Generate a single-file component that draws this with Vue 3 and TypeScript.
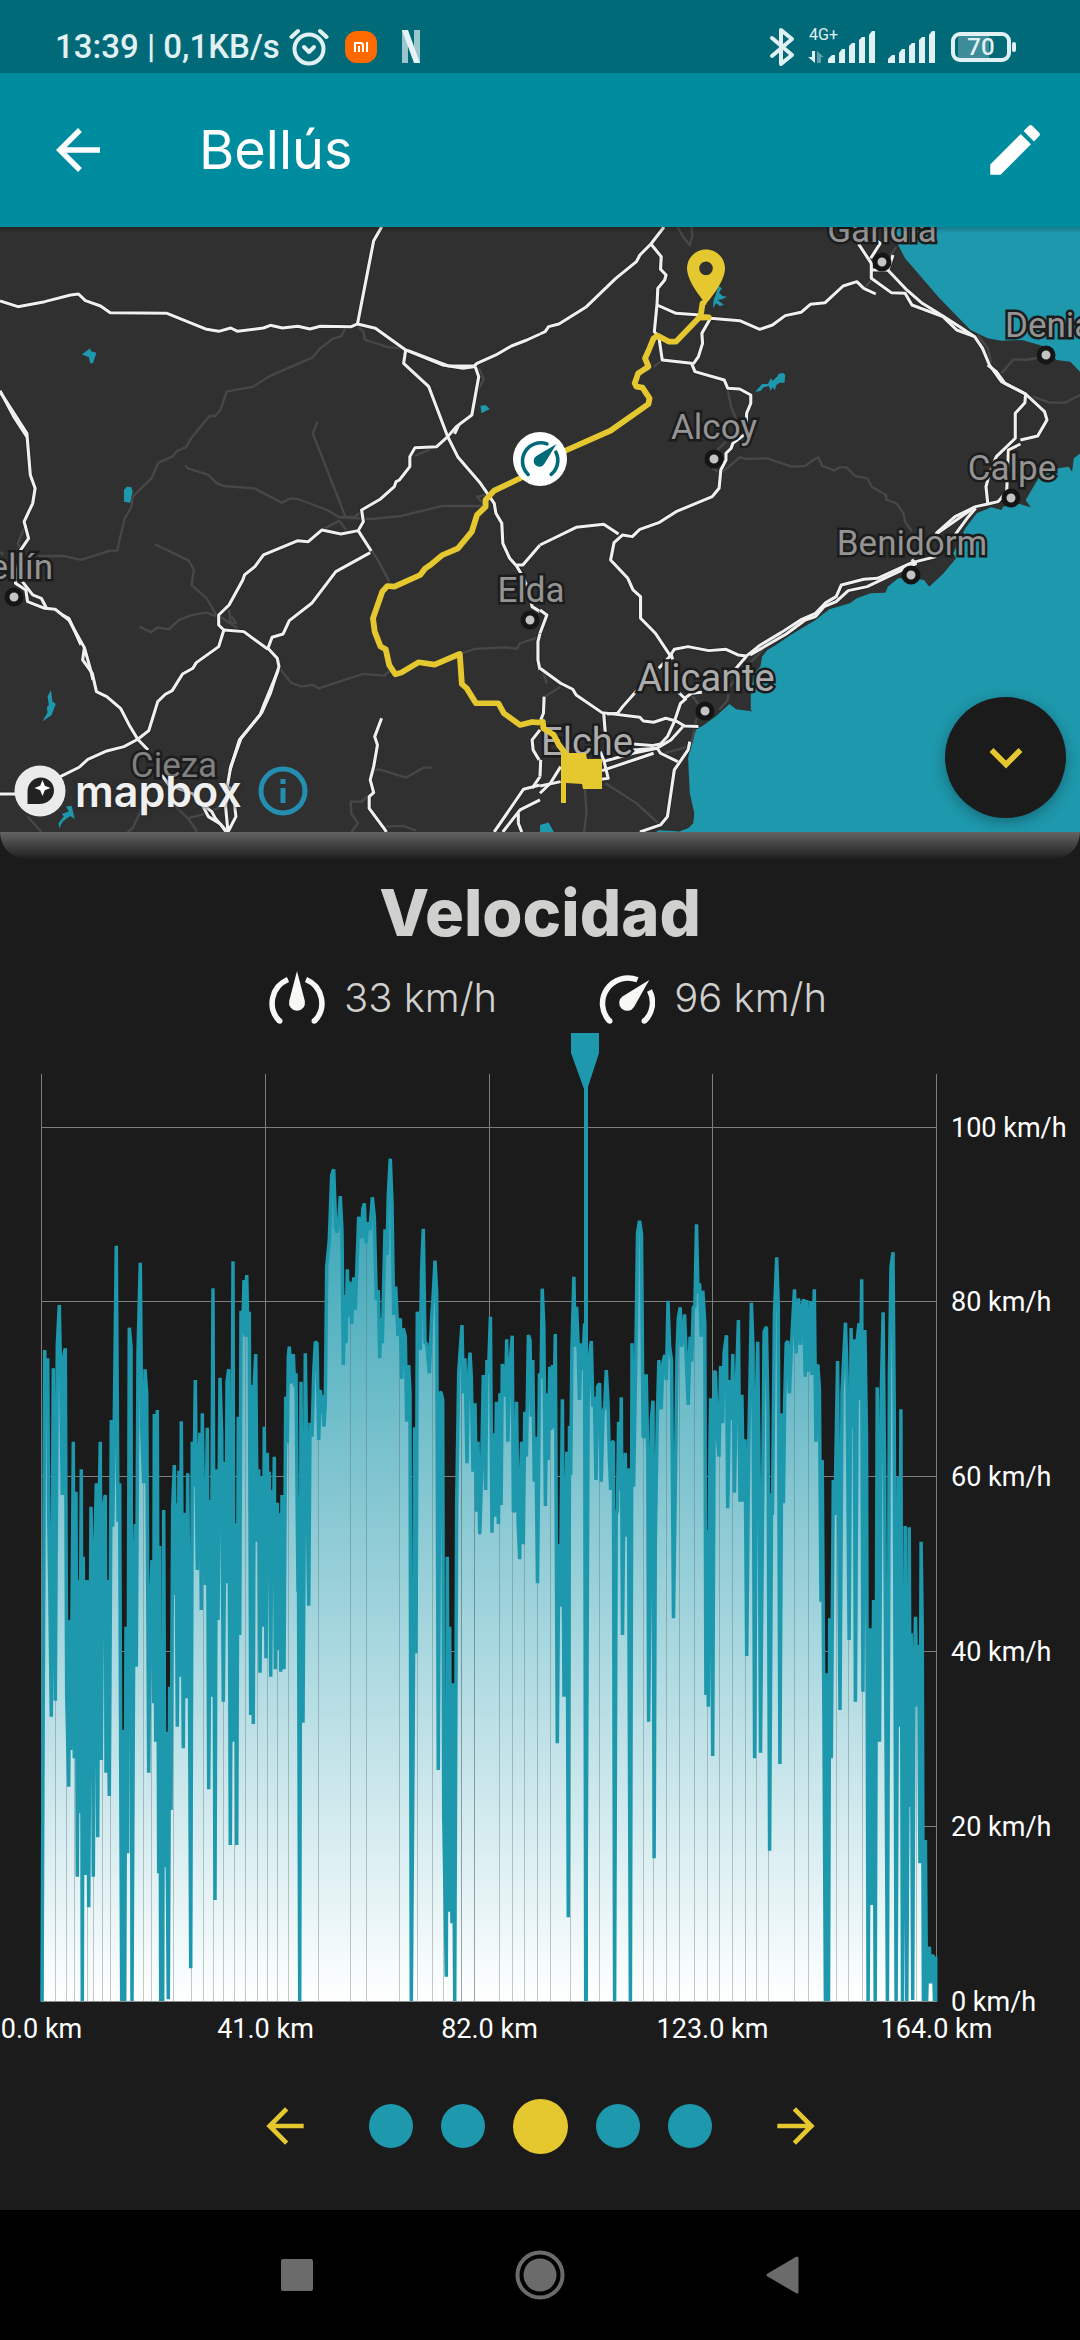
<script setup lang="ts">
import { computed, ref } from 'vue'

interface Tile {
  x: number
  minor: string[]
  major: string[]
  route: string[]
  lakes: string[]
}

interface Place {
  name: string
  x: number
  y: number
  anchor: 'start' | 'middle' | 'end'
  dot?: [number, number]
  size?: 'large'
  dim?: boolean
}

interface Trace {
  origin: number
  perPixel: number
  samples: string
  seams: number[]
}

/* Map geometry, one entry per vector tile */
const tiles: Tile[] = [
  {
    x: 0,
    minor: [
      '1003,325 990,350 968,355 930,385 908,412 780,470 735,500 658,515 640,570 625,588 608,588 555,655 540,682 515,692 500,710 460,728 440,775 385,830 382,860 362,895 340,992 320,992 235,1020 185,1008 110,1008',
      '1040,320 1055,335 1060,360 1130,382 1178,385',
      '922,605 908,640 1003,890',
      '538,735 545,745 605,765 630,790 650,798 738,805 818,848 845,835 865,837 950,870 985,892 1080,897 1165,888 1285,858 1410,858 1385,830 1410,825',
      '935,930 985,902 1005,930',
      '985,892 1030,890 1050,875',
      '450,973 548,1022 563,1050 556,1095 600,1135 625,1180 690,1225',
      '665,1170 670,1210 685,1208 672,1190',
      '405,1220 438,1237 458,1222 490,1228 520,1200 560,1185 600,1178 630,1190',
      '1080,993 1100,1025 1130,1085',
      '812,1345 845,1388 875,1400 908,1395 925,1405 1055,1362 1115,1367 1140,1345',
      '1335,1302 1380,1287 1470,1282 1500,1287 1510,1270 1568,1250',
      '1083,1652 1100,1648 1180,1673 1230,1643 1253,1643',
      '1072,1725 1050,1745 1018,1745 1020,1780 1040,1810 1020,1836',
      '1120,1820 1170,1818 1208,1832',
      '1390,445 1405,478 1385,515',
      '505,1755 545,1795 570,1830 570,1836',
      '545,1795 600,1780 640,1760',
      '70,925 52,970 62,1000',
      '0,995 10,1005',
      '410,1770 385,1825 370,1836',
      '80,1790 120,1836',
      '1205,708 1262,682',
    ],
    major: [
      '0,243 52,260 130,245 205,225 228,222 248,242 292,258 320,278 485,280 600,328 635,334 670,324 690,334 765,324 785,316 820,324 865,319 900,327 930,319 1020,320 1038,312 1090,325 1178,390 1285,435 1345,445 1375,440 1385,430 1440,405 1485,378 1530,360 1568,342',
      '1185,392 1300,437 1375,438',
      '1108,21 1085,62 1038,312',
      '0,515 78,640 88,765 102,805 95,850 70,905 83,955 60,990 58,1000 45,1090 75,1110 80,1145 130,1165 160,1168 200,1200 245,1283 240,1320 268,1360 280,1415 310,1430 350,1465 375,1515 400,1558 430,1590',
      '0,512 40,590 78,650',
      '65,1085 95,1125 120,1135 135,1165',
      '245,1283 262,1345 270,1380',
      '180,1185 200,1195 235,1275',
      '470,1665 490,1695 560,1722 590,1755 615,1775 625,1795 660,1836',
      '590,1760 605,1790 640,1812 655,1834',
      '1380,440 1390,470 1370,585 1325,620 1300,650 1268,680 1205,683 1190,710 1190,740 1160,780 1150,785 1145,800 1105,837 1050,870 1055,905 1040,932 990,942 935,930 895,965 865,962 765,1005 740,1040 710,1065 705,1080 665,1155 635,1185 635,1215 650,1230 635,1280 570,1328 560,1345 530,1362 500,1412 480,1423 458,1445 432,1532 400,1558 360,1580 310,1593 255,1618 230,1642 175,1670 100,1690 50,1722 0,1722',
      '1320,642 1332,615',
      '1178,390 1172,430 1245,500 1300,650 1330,712 1395,790 1435,850 1440,880 1457,910 1460,970 1480,1015 1500,1038 1518,1070 1535,1110 1545,1160 1568,1175',
      '1500,1035 1518,1035 1568,975',
      '1040,932 1078,993',
      '1075,998 975,1055 905,1150 840,1202 822,1242 790,1252 778,1285 805,1315 810,1340 785,1420 760,1478 700,1555 670,1640 660,1700 655,1760 662,1836 685,1790 680,1745 665,1700',
      '650,1230 708,1235 778,1288',
      '808,1350 768,1450 755,1485 695,1560 668,1650',
      '1108,1495 1088,1550 1096,1575 1085,1640 1075,1680 1085,1718 1072,1730 1072,1765 1115,1825 1122,1836',
      '1568,1530 1545,1560 1548,1590 1568,1625',
      '1568,1695 1520,1708 1435,1836',
      '1568,1740 1510,1770 1460,1836',
      '1568,1670 1545,1705',
      '1505,1780 1505,1810 1515,1836',
      '1568,1240 1562,1265 1562,1320 1568,1350',
    ],
    route: [
      '1568,725 1510,775 1435,812 1410,840 1410,860 1385,885 1370,935 1330,985 1285,1005 1250,1035 1235,1045 1220,1065 1145,1100 1125,1098 1110,1115 1083,1195 1088,1235 1105,1280 1120,1288 1130,1335 1148,1363 1165,1358 1215,1327 1262,1334 1335,1302 1341,1392 1355,1405 1382,1450 1447,1450 1463,1480 1510,1515 1545,1506 1568,1508',
    ],
    lakes: [
      '238,403 262,385 264,394 280,398 270,430 262,430 258,412',
      '360,810 368,800 382,802 385,815 378,848 360,845',
      '1395,557 1410,555 1422,567 1398,580',
      '148,1410 152,1445 162,1452 150,1485 123,1505 138,1478 136,1462 142,1455 138,1430',
      '192,1760 208,1758 217,1797 204,1788 182,1805 172,1826 170,1810 185,1790 180,1782 200,1775',
    ],
  },
  {
    x: 540,
    minor: [
      '545,510 555,560 570,600',
      '505,700 540,665',
      '500,745 525,760 580,712 600,717 660,715 730,740 770,738 790,722 808,712 820,738 855,752 870,742 890,742 915,768 950,775 965,802 1005,825 1005,838 1035,850 1055,880 1060,905 1080,935',
      '1340,460 1375,418 1410,420 1460,410',
      '1430,530 1480,548 1525,548 1568,525',
      '400,21 415,50 435,75 442,50 440,21',
      '1270,345 1300,385 1310,430',
      '1035,80 1015,110',
      '945,200 962,180',
      '330,440 350,425',
      '190,1690 280,1750 355,1820',
      '130,1700 135,1780 128,1836',
      '345,1605 430,1580',
      '440,1425 462,1455',
      '655,1280 600,1340 550,1400 545,1440 520,1470',
      '455,1495 440,1570',
      '15,1430 60,1400',
      '5,1345 20,1390',
    ],
    major: [
      '360,21 322,72 290,105 280,125 220,175 135,260 55,312 25,320 15,335 0,342',
      '322,72 352,110 350,148 366,165 362,180 342,205 340,250 332,335 345,350 355,420 440,430 450,455 535,480 545,505 580,507 612,525 612,550 600,580 598,640 560,670 555,685 540,700 540,720 525,750 520,805 500,830 395,875 345,908 290,928 268,950 240,945 215,968 205,1020 255,1075 270,1110 292,1130 292,1195 335,1240 380,1310',
      '340,255 395,280 465,285 495,295 580,302 638,328 675,315 712,287 758,277 785,253 828,248 880,198 920,185 940,205 975,222',
      '495,295 470,340 472,370 460,410 445,432',
      '925,72 962,130 962,175 1020,218 1060,220 1080,255 1170,290 1210,330 1262,350 1285,385 1305,435 1340,485 1410,522 1465,575 1472,600 1445,648 1395,660',
      '975,60 988,70 960,115',
      '1025,105 1010,150 1065,210 1110,250 1170,288 1225,325 1262,350',
      '962,150 1010,150',
      '1300,435 1325,455 1350,490 1410,522 1408,548 1380,580 1380,655 1325,710 1305,760 1295,800 1300,850',
      '1395,672 1360,690 1358,750 1355,815 1330,845 1300,852 1265,860 1205,890 1150,940',
      '1265,865 1240,895 1205,945',
      '1262,862 1140,950',
      '1150,1010 1080,1028 980,1075 940,1078 875,1095 860,1130 830,1148 800,1180 760,1198 700,1238 640,1275 600,1308',
      '1080,1018 1090,1032 1000,1075 950,1100 895,1112 860,1145 825,1160 800,1190 770,1200 715,1242 610,1305',
      '600,1308 575,1305 540,1288 490,1292 430,1280 390,1288 375,1312 345,1345',
      '300,1390 240,1460 225,1480 195,1482',
      '600,1308 565,1350',
      '380,1300 385,1318',
      '395,1410 420,1435 440,1420 470,1417',
      '425,1435 408,1450 390,1505 370,1550 350,1572 325,1577 270,1572',
      '0,1345 60,1390 95,1408 105,1425 180,1478 290,1492 300,1503 330,1507 365,1495 395,1503 420,1518 460,1520',
      '185,1480 190,1545',
      '175,1595 185,1620 198,1675 150,1682',
      '185,1625 200,1620 270,1600 340,1585 380,1560 415,1520',
      '270,1590 340,1585 350,1600 400,1625',
      '180,1652 330,1600',
      '435,1565 430,1590 390,1650 370,1790 350,1815 290,1836',
      '60,1640 30,1690 0,1720',
      '60,1685 0,1698',
      '2,1620 0,1670',
      '0,975 105,922 185,913 228,942',
      '0,1170 20,1185 0,1240',
      '12,1430 10,1480 2,1500',
    ],
    route: [
      '480,245 472,250 466,290 490,292 462,293 395,365 375,365 342,347 330,355 318,385 305,415 315,440 285,460 275,490 280,500 298,503 305,515 318,535 315,552 205,632 78,690 0,725',
      '0,1508 8,1505 10,1525 40,1545 55,1575 75,1602',
    ],
    lakes: [
      '625,515 645,492 662,492 670,475 676,482 690,468 692,462 705,458 712,465 710,488 695,488 686,496 682,510 675,502 670,512 664,498 650,502 640,513',
      '518,198 528,205 520,218 530,228 543,230 530,237 516,240 534,255 522,258 512,250 502,264 504,240 510,225',
      '0,1815 25,1808 40,1836 0,1836',
    ],
  },
]

const tileTransform = (tile: Tile) => `translate(${tile.x} -7) scale(.3444 .3333)`

const sea = [
  '1025,21 1040,75 1060,115 1135,205 1160,235 1250,330 1300,355 1340,362 1400,360 1460,378 1500,420 1540,425 1568,455 1575,455 1575,21',
  '1575,695 1550,715 1545,755 1535,740 1505,745 1450,770 1410,840 1425,862 1385,850 1345,860 1340,870 1310,862 1268,880 1235,925 1200,1000 1208,1015 1170,1062 1130,1100 1115,1080 1080,1075 1040,1075 1010,1100 1003,1118 960,1120 920,1135 900,1150 840,1168 800,1200 760,1225 720,1250 685,1275 660,1290 645,1310 640,1340 622,1360 612,1420 612,1470 618,1475 570,1468 550,1452 510,1490 470,1520 455,1525 440,1565 430,1615 435,1720 448,1780 445,1810 430,1825 400,1836 1575,1836',
  '345,1831 400,1834 400,1840 330,1840',
]

const places: Place[] = [
  { name: 'Gandia', x: 882, y: 15, anchor: 'middle', dot: [882, 35] },
  { name: 'Denia', x: 1005, y: 110, anchor: 'start', dot: [1046, 128] },
  { name: 'Alcoy', x: 714, y: 212, anchor: 'middle', dot: [714, 232] },
  { name: 'Calpe', x: 1012, y: 253, anchor: 'middle', dot: [1011, 271] },
  { name: 'Benidorm', x: 912, y: 328, anchor: 'middle', dot: [911, 348] },
  { name: 'Elda', x: 531, y: 375, anchor: 'middle', dot: [530, 393] },
  { name: 'ellín', x: 53, y: 352, anchor: 'end', dot: [14, 370] },
  { name: 'Cieza', x: 174, y: 550, anchor: 'middle', dim: true },
  { name: 'Alicante', x: 706, y: 464, anchor: 'middle', dot: [705, 484], size: 'large' },
  { name: 'Elche', x: 587, y: 528, anchor: 'middle', size: 'large' },
]

/* Speed recording: "distance,level" samples, split in two chunks */
const traces: Trace[] = [
  {
    origin: 0,
    perPixel: 3,
    samples:
      '126,2825 134,870 138,1022 143,895 146,1360 149,1560 154,1970 160,925 166,1922 172,855 178,735 183,1000 187,1305 190,895 196,865 200,1905 206,2180 209,1680 212,2070 217,1560 220,1145 223,2095 228,1295 232,2450 236,1560 238,2260 244,1228 247,2825 250,1490 256,2445 261,1560 266,2542 273,1340 277,1560 280,2450 285,1460 289,1270 293,2332 297,1360 301,1145 304,2100 308,1480 312,1330 316,1305 318,2138 322,1560 328,2208 334,1080 338,1400 342,1155 349,557 354,1385 359,1270 362,2100 365,2825 369,2010 374,2825 378,1700 383,2380 388,803 393,860 396,2825 402,1545 406,1392 409,1820 414,875 421,608 425,1100 431,1270 435,928 440,1000 446,2138 450,1700 456,1500 461,1930 463,1062 467,2045 472,1050 476,2440 479,1458 482,2825 487,2140 488,2825 491,1350 495,2422 499,2015 505,2818 509,1880 513,2250 518,1340 523,1215 527,1605 528,1330 532,2000 537,1232 541,1850 544,1084 550,2065 554,1358 559,1915 563,1240 568,1740 572,2725 577,1145 582,1280 586,960 592,1530 596,1215 600,1118 604,1650 607,1060 611,1400 616,1575 622,1103 626,2188 632,1320 633,1910 639,685 645,2520 649,1228 654,1680 660,953 665,1125 670,1925 676,1205 678,1570 681,965 686,928 691,2355 699,604 702,2045 707,1390 710,2355 715,1070 719,1725 723,752 728,820 732,660 736,830 740,645 744,830 748,755 752,1965 757,975 760,1992 763,975 767,882 772,1445 776,1228 780,1838 785,1250 790,1700 793,1100 798,1795 802,1178 806,1500 808,1235 812,1850 816,1290 819,1540 823,1190 826,1828 832,1328 836,1770 838,1360 842,1835 846,1305 852,1828 857,1010 862,1150 865,890 868,860 874,970 880,882 884,980 888,940 894,1595 895,1305 899,2825 903,965 909,1988 916,880 920,1180 926,1637 930,1088 936,1130 941,940 946,845 951,850 956,1140 961,990 966,1060 968,1005 972,1100 976,1030 980,620 988,540 995,345 1001,328 1007,500 1011,518 1016,490 1021,408 1026,515 1030,915 1034,705 1038,850 1042,628 1046,770 1049,665 1055,792 1061,652 1066,750 1071,610 1076,470 1081,515 1085,535 1088,450 1093,430 1098,550 1103,487 1110,510 1117,412 1123,470 1129,720 1135,690 1139,895 1143,775 1147,850 1155,508 1161,585 1165,403 1171,296 1176,430 1181,765 1187,680 1194,828 1201,775 1205,957 1210,805 1216,830 1220,1085 1226,915 1230,1000 1234,2825 1239,2100 1244,1102 1248,1780 1252,755 1261,870 1265,620 1270,506 1275,850 1280,850 1288,940 1295,770 1300,700 1305,602 1310,700 1315,2130 1320,995 1324,1000 1328,1020 1331,2260 1335,2500 1339,2750 1342,1490 1346,2555 1349,1700 1352,2380 1356,2590 1359,1870 1364,2825 1370,1320 1376,940 1380,880 1386,795 1390,1000 1395,895 1401,1210 1405,965 1410,878 1414,950 1419,1235 1425,1030 1430,1355 1434,1145 1439,1420',
    seams: [132, 169, 202, 226, 265, 283, 310, 334, 433, 457, 523, 577, 613, 643, 673, 706, 739, 775, 805, 835, 868, 958, 1054, 1102, 1201, 1255, 1300, 1333, 1387, 1426],
  },
  {
    origin: 460,
    perPixel: 2.529,
    samples:
      '50,1420 54,1265 59,945 65,1290 68,900 72,940 77,770 81,1418 85,1120 89,1370 92,1025 97,1392 101,1000 104,1335 107,912 112,955 115,1010 118,838 121,1145 126,920 132,827 135,1355 139,1350 143,1025 147,1385 151,1498 153,1260 156,1145 160,1453 164,1055 168,1190 173,825 177,840 180,1070 184,900 188,1265 192,1130 196,1570 201,940 205,955 208,686 212,795 216,1338 219,1000 223,1200 227,920 230,1110 234,915 237,1105 241,822 246,2050 250,1452 254,1640 259,1018 263,1910 267,1390 270,1175 274,2572 277,1098 280,1245 283,870 288,650 291,860 295,740 299,860 302,1020 306,850 310,930 315,790 318,2825 324,1040 328,885 332,843 336,1040 340,1010 344,1260 348,980 353,970 357,1265 362,1055 366,1040 370,930 374,1020 378,1200 381,1290 385,1145 388,1145 391,2825 395,1365 398,1350 401,1085 405,1290 408,1012 411,1725 414,1375 418,1178 421,1430 426,1225 431,2825 435,850 439,1280 445,850 449,520 454,482 459,522 463,1130 467,1130 471,943 475,1190 477,1985 481,1530 484,1080 488,1022 491,2395 494,1440 499,1075 503,900 509,1048 513,910 518,885 522,960 526,722 530,860 535,900 540,1675 544,1320 549,870 552,775 557,742 560,860 564,830 568,763 573,920 577,1035 582,830 586,905 590,740 594,740 598,493 602,700 606,670 610,830 614,692 619,790 622,1905 625,1410 628,1940 632,1165 634,1015 639,2088 643,935 646,935 651,1125 655,1190 659,918 664,1090 668,878 674,826 677,1345 682,960 686,1080 690,882 694,1298 699,975 704,780 708,1325 713,1004 717,1325 721,1138 725,1788 730,1165 734,930 737,728 741,860 745,2095 750,1000 753,845 757,1280 760,2078 765,1370 769,815 775,800 779,1065 783,2372 788,1300 790,1365 795,765 801,592 805,740 809,2112 814,1060 818,1330 821,1034 825,850 829,843 833,1000 838,860 843,750 846,688 850,880 856,715 861,855 864,745 869,717 873,950 877,720 882,935 887,724 890,945 896,688 900,1145 905,913 909,985 913,1625 916,1200 920,1912 924,2825 928,1840 932,2825 935,1675 939,2095 944,1260 948,1365 955,903 961,1950 966,1000 970,900 975,788 979,950 984,1740 989,804 993,1105 997,838 1000,1925 1005,835 1009,790 1012,1020 1016,658 1019,1895 1024,810 1028,1130 1032,2825 1037,1705 1041,2535 1046,1620 1050,2825 1055,982 1061,2045 1065,1025 1070,757 1074,1270 1081,2825 1086,940 1090,620 1095,577 1098,1030 1103,2825 1108,1250 1112,2000 1115,1048 1119,2825 1123,2100 1126,1398 1130,2825 1136,1402 1139,2240 1141,1720 1145,2820 1148,1900 1152,1670 1156,1940 1160,1755 1163,2410 1166,1445 1169,1700 1172,2825 1177,2340 1180,2825 1183,2680 1187,2660 1190,2770 1194,2690 1197,2685 1200,2825 1203,2690 1203,2825',
    seams: [6, 39, 102, 135, 165, 198, 231, 281, 353, 466, 491, 524, 557, 595, 628, 658, 691, 724, 752, 782, 846, 883, 954, 984, 1018, 1156],
  },
]

const plot = { left: 41.5, right: 936.5, top: 41, bottom: 968.5 }
const rowStep = 174.8
const columnStep = (plot.right - plot.left) / 4

const rows = [0, 20, 40, 60, 80, 100].map((speed, i) => ({
  label: `${speed} km/h`,
  y: Math.round(plot.bottom - i * rowStep) - 0.5,
}))
const columns = [0, 41, 82, 123, 164].map((distance, i) => ({
  label: `${distance.toFixed(1)} km`,
  x: Math.floor(plot.left + i * columnStep) + 0.5,
}))

const speedLine = computed(() =>
  traces
    .flatMap((trace) =>
      trace.samples.split(' ').map((sample) => {
        const [x, y] = sample.split(',').map(Number)
        return `${(trace.origin + x / trace.perPixel).toFixed(1)},${(27 + y / 3).toFixed(1)}`
      }),
    )
    .join(' '),
)
const speedArea = computed(() => `${plot.left},${plot.bottom} ${speedLine.value} ${plot.right},${plot.bottom}`)
const seams = traces.flatMap((trace) => trace.seams.map((x) => Math.round(trace.origin + x / trace.perPixel) - 0.5))

const pages = ['Altitud', 'Pendiente', 'Velocidad', 'Tiempo', 'Inclinación']
const page = ref(2)
const move = (delta: number) => {
  page.value = (page.value + delta + pages.length) % pages.length
}
</script>

<template>
  <div class="screen">
    <div class="status">
      <span class="clock">13:39 | 0,1KB/s</span>
      <svg class="alarm" viewBox="0 0 40 38" aria-hidden="true">
        <g fill="none" stroke="#e0f0f3" stroke-width="4" stroke-linecap="round" stroke-linejoin="round">
          <circle cx="20" cy="21" r="14.5" />
          <path d="M2.500 9 9 3M37.500 9 31 3" />
          <path d="m15 19 5 5 5-5" />
        </g>
      </svg>
      <svg class="mi" viewBox="0 0 32 32" aria-hidden="true">
        <rect width="32" height="32" rx="12" fill="#ff6a00" />
        <path d="M10 21v-9h5.500q2.500 0 2.500 2.500V21M14 15v6M22 11v10" fill="none" stroke="#fff" stroke-width="2" />
      </svg>
      <svg class="netflix" viewBox="0 0 18 33" aria-hidden="true">
        <path d="M0 0h6v33H0zM12 0h6v33h-6z" fill="#9cc6ce" />
        <path d="M0 0h6l12 33h-6z" fill="#e6f3f5" />
      </svg>
      <svg class="bluetooth" viewBox="0 0 26 40" aria-hidden="true">
        <path d="m3 11 20 17-11 9V3l11 9L3 29" fill="none" stroke="#e0f0f3" stroke-width="4" stroke-linecap="round" stroke-linejoin="round" />
      </svg>
      <div class="cell">
        <span class="network">4G+</span>
        <svg viewBox="0 0 68 32" aria-hidden="true">
          <path d="M4 20h3v12L0 26h4z" fill="#e0f0f3" />
          <path d="M9 32V20l7 6h-3v6z" fill="#5fa0ab" />
          <path d="M20 32v-4l4-4h3v8zM31 32V22l3-4h3v14zM41 32V15l3-3h3v20zM51 32V9l3-3h3v26zM61 32V4l3-4h3v32z" fill="#e0f0f3" />
        </svg>
      </div>
      <svg class="signal" viewBox="0 0 48 32" aria-hidden="true">
        <path d="M0 32v-4l4-4h3v8zM11 32V22l3-4h3v14zM21 32V15l3-3h3v20zM31 32V9l3-3h3v26zM41 32V4l3-4h3v32z" fill="#e0f0f3" />
      </svg>
      <div class="battery"><span>70</span></div>
    </div>

    <header class="bar">
      <button class="bar-button" type="button" aria-label="Volver">
        <svg viewBox="0 0 24 24"><path d="M20 11H7.830l5.590-5.590L12 4l-8 8 8 8 1.410-1.410L7.830 13H20z" fill="#fff" /></svg>
      </button>
      <h1>Bellús</h1>
      <button class="bar-button" type="button" aria-label="Editar">
        <svg viewBox="0 0 24 24"><path d="M3 17.250V21h3.750L17.810 9.940l-3.750-3.750zM20.710 7.040a1 1 0 0 0 0-1.410l-2.340-2.340a1 1 0 0 0-1.410 0l-1.830 1.830 3.750 3.750z" fill="#fff" /></svg>
      </button>
    </header>

    <section class="map" aria-label="Mapa de la ruta">
      <svg class="map-canvas" viewBox="0 0 1080 605" preserveAspectRatio="xMidYMid slice">
        <rect width="1080" height="605" fill="#303030" />
        <g :transform="tileTransform(tiles[1])" fill="#1e98ac">
          <polygon v-for="shape in sea" :key="shape" :points="shape" />
        </g>
        <g v-for="tile in tiles" :key="tile.x" :transform="tileTransform(tile)" fill="none" stroke-linejoin="round">
          <polygon v-for="lake in tile.lakes" :key="lake" :points="lake" fill="#1e98ac" />
          <polyline v-for="road in tile.minor" :key="road" :points="road" class="minor" />
          <polyline v-for="road in tile.major" :key="road" :points="road" class="casing" />
          <polyline v-for="road in tile.major" :key="road" :points="road" class="major" />
        </g>
        <g v-for="place in places" :key="place.name" class="place" :class="[place.size, { dim: place.dim }]">
          <circle v-if="place.dot" :cx="place.dot[0]" :cy="place.dot[1]" r="7" />
          <text :x="place.x" :y="place.y" :text-anchor="place.anchor">{{ place.name }}</text>
        </g>
        <g v-for="tile in tiles" :key="tile.x" :transform="tileTransform(tile)">
          <polyline v-for="part in tile.route" :key="part" :points="part" class="route" />
        </g>
        <path transform="translate(673.500 17) scale(2.710)" d="M12 2C8.130 2 5 5.130 5 9c0 5.250 7 13 7 13s7-7.750 7-13c0-3.870-3.130-7-7-7zm0 9.500a2.500 2.500 0 1 1 0-5 2.500 2.500 0 0 1 0 5z" fill="#e5c830" />
        <path d="M561 526h25l1 6h15v30h-19l-1-5-16-1v20h-5z" fill="#e5c830" />
        <g transform="translate(540 232)">
          <circle r="27" fill="#fff" />
          <g transform="translate(-20.500 -22) scale(.72)">
            <path d="M12 52A25.500 25.500 0 0 1 38 9.500M50.500 21A25.500 25.500 0 0 1 44 52" fill="none" stroke="#006a79" stroke-width="5" stroke-linecap="round" />
            <path transform="rotate(45 28 33)" d="M28 0 35.600 31a8 8 0 1 1-15.200 0z" fill="#006a79" />
          </g>
        </g>
      </svg>
      <div class="attribution">
        <svg class="mapbox-mark" viewBox="0 0 52 52" aria-hidden="true">
          <circle cx="26" cy="26" r="25.500" fill="#ebebeb" />
          <path d="M13.500 39V28C13 18 20 12.500 27 12.500S40 18 40 25.500 34 39 25 39z" fill="#222" />
          <path d="m28.500 15 2.300 5.700 5.700 2.300-5.700 2.300-2.300 5.700-2.300-5.700-5.700-2.300 5.700-2.300z" fill="#fff" />
        </svg>
        <span class="mapbox">mapbox</span>
        <button class="info" type="button" aria-label="Información del mapa">
          <svg viewBox="0 0 50 50">
            <circle cx="25" cy="25" r="22" fill="none" stroke="#238eb0" stroke-width="5" />
            <path d="M22.500 13h5v5h-5zM22.500 22h5v15h-5z" fill="#238eb0" />
          </svg>
        </button>
      </div>
      <button class="collapse" type="button" aria-label="Contraer mapa">
        <svg viewBox="0 0 34 22"><path d="m2.500 3 14.500 14.500L31.500 3" fill="none" stroke="#e5c830" stroke-width="5.500" /></svg>
      </button>
    </section>

    <main class="sheet">
      <div class="edge"></div>
      <h2>Velocidad</h2>
      <div class="stats">
        <div class="stat">
          <svg viewBox="0 0 56 56" aria-hidden="true">
            <path d="M10.500 51A25.500 25.500 0 0 1 19 9.500M45.500 51A25.500 25.500 0 0 0 37 9.500" fill="none" stroke="#f8f8f6" stroke-width="5.500" />
            <circle cx="10.800" cy="51" r="2.700" fill="#f8f8f6" />
            <circle cx="45.200" cy="51" r="2.700" fill="#f8f8f6" />
            <path d="M28 1 35.800 31a8 8 0 1 1-15.600 0z" fill="#f8f8f6" />
          </svg>
          <span>33 km/h</span>
        </div>
        <div class="stat">
          <svg viewBox="0 0 56 56" aria-hidden="true">
            <path d="M10.500 51A25.500 25.500 0 0 1 38.500 9.800M50.500 20.500A25.500 25.500 0 0 1 45.500 51" fill="none" stroke="#f8f8f6" stroke-width="5.500" />
            <circle cx="10.800" cy="51" r="2.700" fill="#f8f8f6" />
            <circle cx="45.200" cy="51" r="2.700" fill="#f8f8f6" />
            <path transform="rotate(44 28 33)" d="M28 1 35.800 31a8 8 0 1 1-15.600 0z" fill="#f8f8f6" />
          </svg>
          <span>96 km/h</span>
        </div>
      </div>

      <svg class="chart" viewBox="0 0 1080 1020" role="img" aria-label="Velocidad por distancia">
        <defs>
          <linearGradient id="speed-fill" gradientUnits="userSpaceOnUse" x1="0" :y1="plot.top" x2="0" :y2="plot.bottom">
            <stop offset="0" stop-color="#1e98ac" />
            <stop offset="1" stop-color="#fff" />
          </linearGradient>
          <clipPath id="speed-clip"><polygon :points="speedArea" /></clipPath>
        </defs>
        <g class="grid">
          <line v-for="row in rows" :key="row.label" :x1="plot.left" :x2="plot.right" :y1="row.y" :y2="row.y" />
          <line v-for="column in columns" :key="column.label" :x1="column.x" :x2="column.x" :y1="plot.top" :y2="plot.bottom" />
        </g>
        <polygon :points="speedArea" fill="url(#speed-fill)" />
        <g clip-path="url(#speed-clip)" stroke="#506468" stroke-opacity=".35">
          <line v-for="x in seams" :key="x" :x1="x" :x2="x" :y1="plot.top" :y2="plot.bottom" />
        </g>
        <polyline :points="speedLine" fill="none" stroke="#1e98ac" stroke-width="3.500" stroke-linejoin="bevel" />
        <line :x1="plot.left" :x2="plot.right" :y1="plot.bottom" :y2="plot.bottom" stroke="#8a8f90" />
        <path d="M571 0h28v20l-11 34v914h-4V56L571 20z" fill="#1e98ac" />
        <g class="axis">
          <text v-for="row in rows" :key="row.label" x="951" :y="row.y + 9">{{ row.label }}</text>
          <text v-for="column in columns" :key="column.label" :x="column.x" y="1005" text-anchor="middle">{{ column.label }}</text>
        </g>
      </svg>

      <nav class="pager" aria-label="Gráficas">
        <button class="step" type="button" aria-label="Anterior" @click="move(-1)">
          <svg viewBox="0 0 24 24"><path d="M20 11H7.830l5.590-5.590L12 4l-8 8 8 8 1.410-1.410L7.830 13H20z" fill="#e5c830" /></svg>
        </button>
        <div class="dots">
          <button v-for="(name, i) in pages" :key="name" class="dot" :class="{ active: i === page }" type="button" :aria-label="name" @click="page = i"></button>
        </div>
        <button class="step" type="button" aria-label="Siguiente" @click="move(1)">
          <svg viewBox="0 0 24 24"><path d="m12 4-1.410 1.410L16.170 11H4v2h12.170l-5.580 5.590L12 20l8-8z" fill="#e5c830" /></svg>
        </button>
      </nav>
    </main>

    <footer class="system">
      <button type="button" aria-label="Recientes">
        <svg viewBox="0 0 50 50"><rect x="9" y="9" width="32" height="32" rx="2" fill="#6b6b6b" /></svg>
      </button>
      <button type="button" aria-label="Inicio">
        <svg viewBox="0 0 50 50">
          <circle cx="25" cy="25" r="22.500" fill="none" stroke="#6b6b6b" stroke-width="4" />
          <circle cx="25" cy="25" r="16.500" fill="#6b6b6b" />
        </svg>
      </button>
      <button type="button" aria-label="Atrás">
        <svg viewBox="0 0 50 50"><path d="M10 25 39 8v34z" fill="#6b6b6b" stroke="#6b6b6b" stroke-width="3" stroke-linejoin="round" /></svg>
      </button>
    </footer>
  </div>
</template>

<style>
body {
  margin: 0;
  background: #1b1b1b;
}
</style>

<style scoped>
.screen {
  display: flex;
  flex-direction: column;
  min-height: 100vh;
  background: #1b1b1b;
  font-family: Inter, Roboto, sans-serif;
}

button {
  display: block;
  padding: 0;
  border: 0;
  background: none;
  cursor: pointer;
}

svg {
  display: block;
}

.status {
  display: flex;
  align-items: center;
  box-sizing: border-box;
  height: 73px;
  padding: 20px 69px 0 55px;
  background: #006a79;
  color: #e0f0f3;
  font-family: Roboto, sans-serif;
}

.clock {
  font-size: 33px;
  font-weight: 500;
  line-height: 40px;
  white-space: nowrap;
}

.alarm {
  width: 40px;
  height: 38px;
  margin-left: 9px;
}

.mi {
  width: 32px;
  height: 32px;
  margin-left: 16px;
}

.netflix {
  width: 18px;
  height: 33px;
  margin-left: 25px;
}

.bluetooth {
  width: 26px;
  height: 40px;
  margin-left: auto;
}

.cell {
  position: relative;
  margin-left: 13px;
}

.cell svg {
  width: 68px;
  height: 32px;
}

.network {
  position: absolute;
  top: -4px;
  left: 1px;
  font-size: 16px;
  line-height: 16px;
}

.signal {
  width: 48px;
  height: 32px;
  margin-left: 12px;
}

.battery {
  position: relative;
  display: flex;
  align-items: center;
  justify-content: center;
  box-sizing: border-box;
  width: 60px;
  height: 30px;
  margin-left: 15px;
  border: 4px solid #e0f0f3;
  border-radius: 9px;
  background: linear-gradient(90deg, transparent 3px, #3d8c98 3px, #3d8c98 34px, transparent 34px);
  font-size: 24px;
  font-weight: 500;
  line-height: 22px;
}

.battery::after {
  position: absolute;
  top: 6px;
  right: -9px;
  width: 4px;
  height: 10px;
  border-radius: 2px;
  background: #e0f0f3;
  content: '';
}

.bar {
  display: flex;
  align-items: center;
  box-sizing: border-box;
  height: 154px;
  padding: 0 32px 0 45px;
  background: #008c9f;
  color: #fff;
}

.bar h1 {
  flex: 1;
  margin: 0 0 0 88px;
  font-size: 54px;
  font-weight: 400;
  line-height: 64px;
}

.bar-button svg {
  width: 66px;
  height: 66px;
}

.map {
  position: relative;
  overflow: hidden;
}

.map-canvas {
  width: 100%;
  height: auto;
}

.map::before {
  position: absolute;
  inset: 0 0 auto;
  height: 6px;
  background: linear-gradient(rgba(0, 0, 0, 0.2), transparent);
  content: '';
}

.minor {
  stroke: #474747;
  stroke-width: 7;
}

.casing {
  stroke: #262626;
  stroke-width: 14;
}

.major {
  stroke: #f0f0f0;
  stroke-width: 9;
}

.route {
  fill: none;
  stroke: #e5c830;
  stroke-width: 17;
  stroke-linejoin: round;
}

.place circle {
  fill: #c4c4c4;
  stroke: #151515;
  stroke-width: 5;
}

.place text {
  fill: #949494;
  stroke: #1c1c1c;
  stroke-width: 5;
  paint-order: stroke;
  font-family: Roboto, sans-serif;
  font-size: 35px;
}

.place.large text {
  fill: #acacac;
  font-size: 38px;
}

.place.dim text {
  fill: #808080;
}

.attribution {
  position: absolute;
  bottom: 15px;
  left: 14px;
  display: flex;
  align-items: center;
}

.mapbox-mark {
  width: 52px;
  height: 52px;
}

.mapbox {
  margin: 0 16px 0 9px;
  color: #f0f0f0;
  font-size: 43px;
  font-weight: 600;
  line-height: 48px;
  text-shadow: 0 0 4px #222;
}

.info svg {
  width: 50px;
  height: 50px;
}

.collapse {
  position: absolute;
  right: 14px;
  bottom: 14px;
  display: flex;
  align-items: center;
  justify-content: center;
  width: 121px;
  height: 121px;
  border-radius: 50%;
  background: #1b1b1b;
  box-shadow: 0 4px 14px rgba(0, 0, 0, 0.3);
}

.collapse svg {
  width: 34px;
  height: 22px;
}

.sheet {
  display: flex;
  flex: 1;
  flex-direction: column;
}

.edge {
  height: 28px;
  border-radius: 0 0 28px 28px;
  background: linear-gradient(#646466, #1b1b1b);
}

.sheet h2 {
  margin: 17px 0 0;
  color: #d0d0ce;
  font-size: 65px;
  font-weight: 800;
  line-height: 72px;
  text-align: center;
}

.stats {
  display: flex;
  justify-content: center;
  gap: 102px;
  margin-top: 21px;
  padding-left: 16px;
}

.stat {
  display: flex;
  align-items: center;
  gap: 19px;
  color: #d0d0ce;
  font-size: 40px;
  font-weight: 300;
  line-height: 56px;
}

.stat svg {
  width: 56px;
  height: 56px;
}

.chart {
  width: 100%;
  height: auto;
  margin-top: 7px;
}

.grid line {
  stroke: #7d7d7d;
  stroke-width: 1;
}

.axis text {
  fill: #fff;
  font-family: Roboto, sans-serif;
  font-size: 27px;
}

.pager {
  display: flex;
  align-items: center;
  justify-content: center;
  gap: 56px;
  padding: 45px 0 55px;
}

.step svg {
  width: 56px;
  height: 56px;
}

.dots {
  display: flex;
  align-items: center;
  gap: 28px;
}

.dot {
  width: 44px;
  height: 44px;
  border-radius: 50%;
  background: #1e98ac;
}

.dot.active {
  width: 55px;
  height: 55px;
  background: #e5c830;
}

.system {
  display: flex;
  align-items: center;
  justify-content: center;
  gap: 193px;
  height: 130px;
  background: #000;
}

.system svg {
  width: 50px;
  height: 50px;
}
</style>
